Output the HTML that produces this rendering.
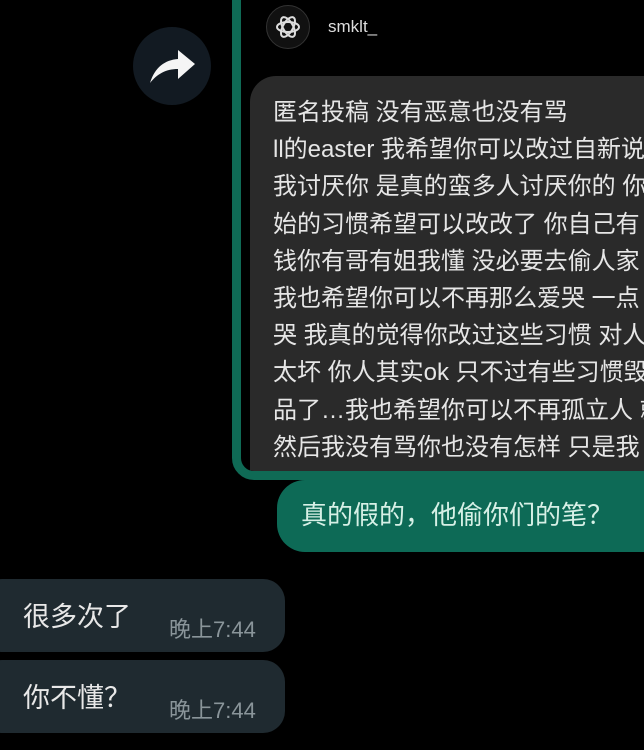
<!DOCTYPE html>
<html><head><meta charset="utf-8"><style>
body{margin:0;width:644px;height:750px;background:#000;overflow:hidden;position:relative;font-family:"Liberation Sans","Noto Sans CJK SC",sans-serif}
.frame{position:absolute;left:232px;top:-30px;width:460px;height:492px;border:9px solid #0f6a55;border-radius:22px;background:#000;overflow:hidden}
.inner{position:absolute;left:9px;top:97px;width:460px;height:400px;background:#2a2a2a;border-radius:26px 0 0 0}
.txt{position:absolute;left:23px;top:18px;white-space:nowrap;color:#e6e6e6;font-size:24px;line-height:37.2px}
.share{position:absolute;left:133px;top:27px;width:78px;height:78px;border-radius:50%;background:#121a22}
.av{position:absolute;left:266px;top:5px;width:44px;height:44px;border-radius:50%;background:#111;border:1px solid #333;box-sizing:border-box}
.name{position:absolute;left:328px;top:17px;color:#ddd;font-size:17px}
.g{position:absolute;left:277px;top:480px;width:400px;height:72px;background:#0d6a56;border-radius:28px;color:#d6f0e6;font-size:26px;line-height:70px;padding-left:24px;box-sizing:border-box}
.b{position:absolute;left:-20px;width:305px;height:73px;background:#1f2a30;border-radius:22px}
.b .t{position:absolute;left:43px;top:16px;color:#e8e8e8;font-size:27px}
.b .tm{position:absolute;left:189px;top:33px;color:#8a959a;font-size:22px}
</style></head><body>
<div class="share"><svg width="78" height="78" viewBox="0 0 78 78"><path d="M17 56 C22 40 32 33 45 32 L45 23 L62 37 L45 52 L45 42 C33 42 24 47 17 56Z" fill="#f5f5f5"/></svg></div>
<div class="frame"><div class="inner"><div class="txt">匿名投稿 没有恶意也没有骂<br>ll的easter 我希望你可以改过自新说实<br>我讨厌你 是真的蛮多人讨厌你的 你<br>始的习惯希望可以改改了 你自己有<br>钱你有哥有姐我懂 没必要去偷人家<br>我也希望你可以不再那么爱哭 一点<br>哭 我真的觉得你改过这些习惯 对人<br>太坏 你人其实ok 只不过有些习惯毁<br>品了…我也希望你可以不再孤立人 就<br>然后我没有骂你也没有怎样 只是我</div></div></div>
<div class="av"><svg width="42" height="42" viewBox="0 0 42 42"><g fill="none" stroke="#ddd" stroke-width="2"><ellipse cx="21" cy="21" rx="11" ry="5"/><ellipse cx="21" cy="21" rx="11" ry="5" transform="rotate(60 21 21)"/><ellipse cx="21" cy="21" rx="11" ry="5" transform="rotate(120 21 21)"/></g></svg></div>
<div class="name">smklt_</div>
<div class="g">真的假的，他偷你们的笔？</div>
<div class="b" style="top:579px"><span class="t">很多次了</span><span class="tm">晚上7:44</span></div>
<div class="b" style="top:660px"><span class="t">你不懂？</span><span class="tm">晚上7:44</span></div>
</body></html>
